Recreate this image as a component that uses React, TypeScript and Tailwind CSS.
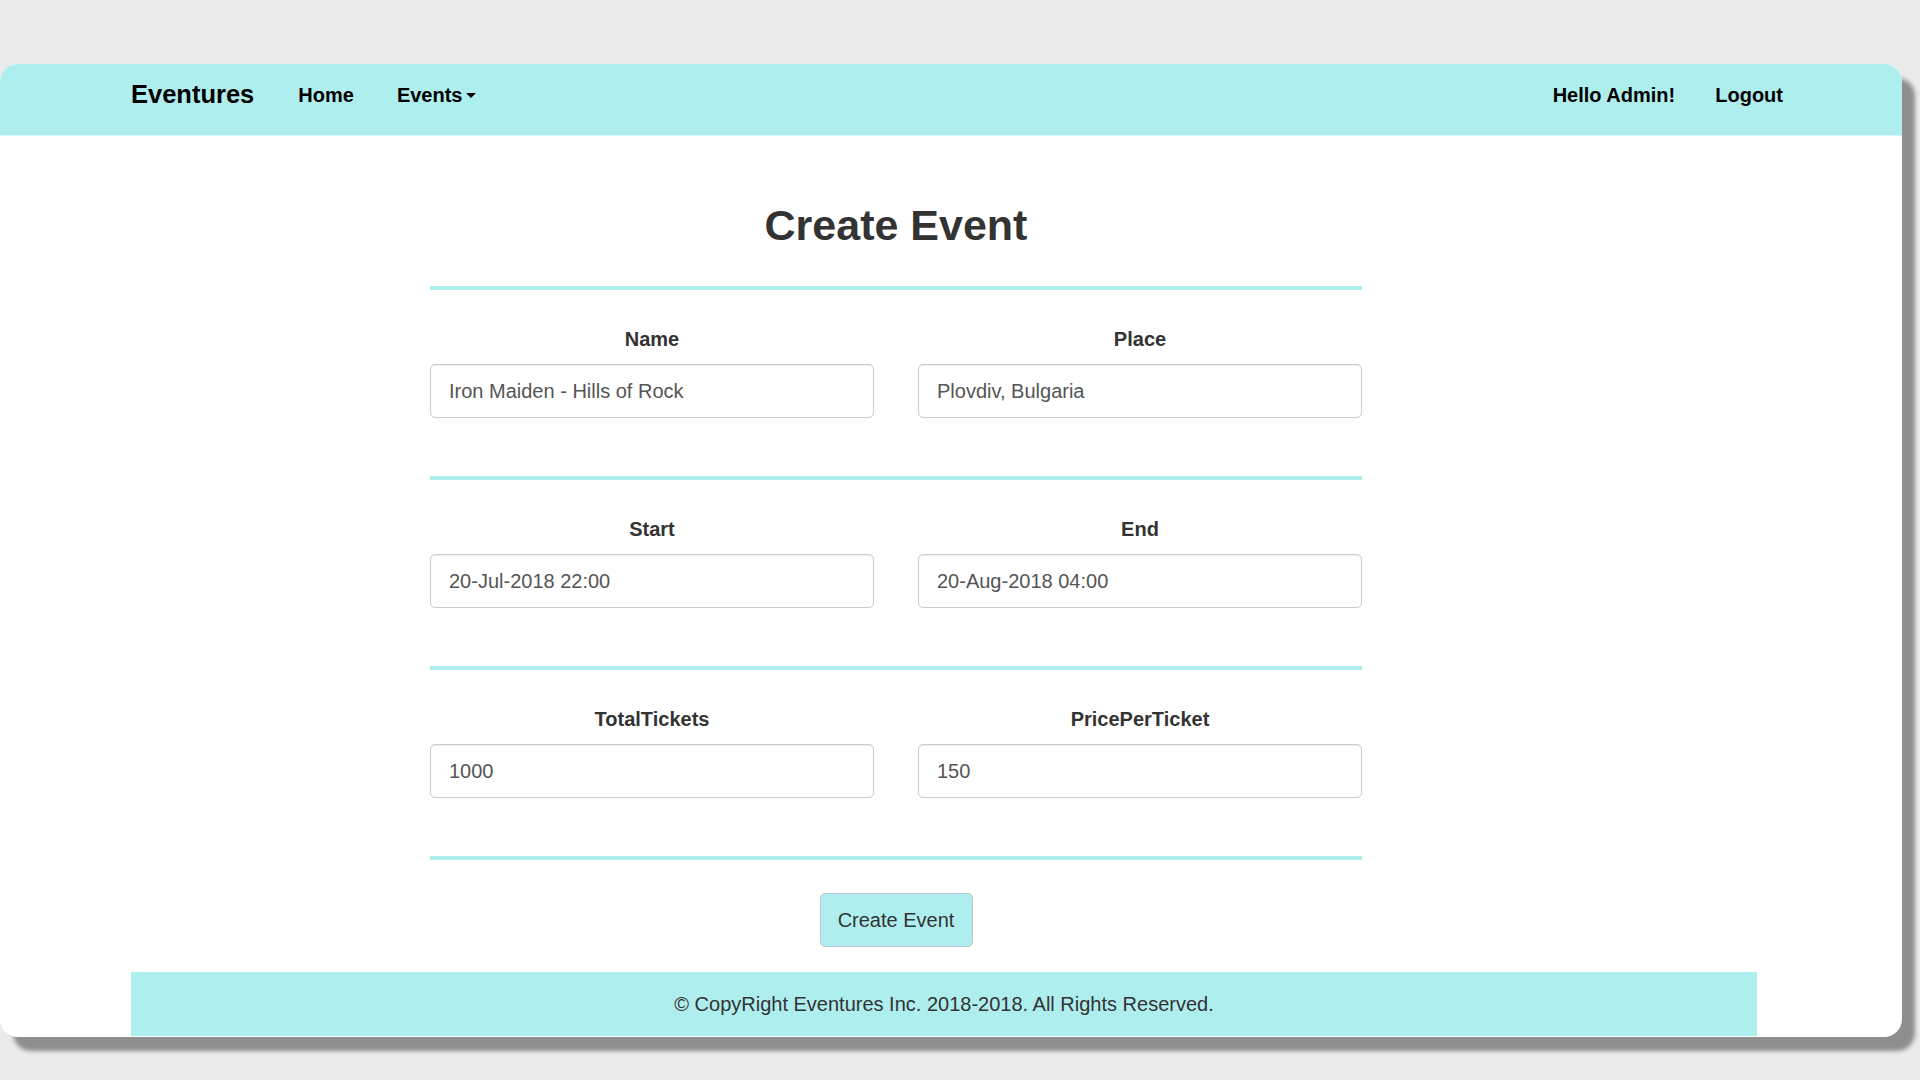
import React from 'react';

const sections = [
  [
    { label: 'Name', value: 'Iron Maiden - Hills of Rock' },
    { label: 'Place', value: 'Plovdiv, Bulgaria' },
  ],
  [
    { label: 'Start', value: '20-Jul-2018 22:00' },
    { label: 'End', value: '20-Aug-2018 04:00' },
  ],
  [
    { label: 'TotalTickets', value: '1000' },
    { label: 'PricePerTicket', value: '150' },
  ],
];

const Field = ({ label, value }: { label: string; value: string }) => (
  <div className="flex w-[444px] flex-col">
    <label className="h-[24px] text-center text-[20px] font-bold leading-[24px] text-[#333]">{label}</label>
    <input
      readOnly
      value={value}
      className="mt-[13px] h-[54px] w-full rounded-[5px] border border-[#ccc] bg-white px-[18px] text-[20px] text-[#555] shadow-[inset_0_1px_1px_rgba(0,0,0,0.075)] outline-none"
    />
  </div>
);

const Rule = () => <div className="h-[4px] w-full bg-[#afeeee]" />;

export default function App() {
  return (
    <div className="min-h-screen w-full bg-[#ebebeb] pt-[64px] font-['Liberation_Sans',Arial,sans-serif]">
      <div className="flex h-[973px] w-[1902px] flex-col overflow-hidden rounded-[18px] bg-white shadow-[13px_14px_4px_#8e8e8e]">
        {/* Navbar */}
        <nav className="flex h-[72px] shrink-0 items-center border-b border-[#d4f6f6] bg-[#afeeee] pb-[10px] pl-[131px] pr-[119px] text-black">
          <span className="text-[25.5px] font-bold">Eventures</span>
          <a className="ml-[44px] text-[20px] font-bold">Home</a>
          <a className="ml-[43px] flex items-center text-[20px] font-bold">
            Events
            <span className="ml-[4px] mt-[2px] h-0 w-0 border-x-[5px] border-t-[5px] border-x-transparent border-t-black" />
          </a>
          <div className="ml-auto flex items-center gap-[40px] text-[20px] font-bold">
            <a>Hello Admin!</a>
            <a>Logout</a>
          </div>
        </nav>

        {/* Form */}
        <div className="ml-[430px] flex w-[932px] flex-col">
          <h2 className="mt-[65px] h-[48px] text-center text-[43px] font-bold leading-[48px] text-[#333]">Create Event</h2>
          <div className="mt-[37px]">
            <Rule />
          </div>
          {sections.map((row, i) => (
            <div key={i} className="flex flex-col">
              <div className="mt-[37px] flex justify-between">
                {row.map((f) => (
                  <Field key={f.label} label={f.label} value={f.value} />
                ))}
              </div>
              <div className="mt-[58px]">
                <Rule />
              </div>
            </div>
          ))}
          <div className="mt-[33px] flex justify-center">
            <button className="h-[54px] w-[153px] rounded-[5px] border border-[#bcc8c8] bg-[#afeeee] text-[20px] text-[#333]">
              Create Event
            </button>
          </div>
        </div>

        {/* Footer */}
        <footer className="ml-[131px] mt-[25px] flex h-[64px] w-[1626px] items-center justify-center bg-[#afeeee] text-[20px] text-[#333]">
          © CopyRight Eventures Inc. 2018-2018. All Rights Reserved.
        </footer>
      </div>
    </div>
  );
}
